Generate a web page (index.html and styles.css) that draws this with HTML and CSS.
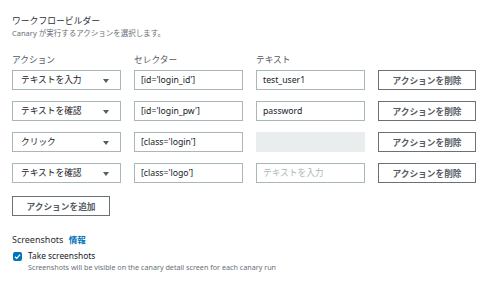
FILE: index.html
```html
<!DOCTYPE html>
<html lang="ja">
<head>
    <meta charset="UTF-8">
    <title>ワークフロービルダー</title>
    <link rel="stylesheet" href="styles.css">
</head>
<body>
    <div class="builder">
        <div class="header">
            <h2>ワークフロービルダー</h2>
            <p class="desc">Canary が実行するアクションを選択します。</p>
        </div>

        <div class="grid">
            <div class="col-label">アクション</div>
            <div class="col-label">セレクター</div>
            <div class="col-label">テキスト</div>
            <div></div>

            <div class="select">テキストを入力<span class="caret"></span></div>
            <div class="input">[id='login_id']</div>
            <div class="input">test_user1</div>
            <button class="btn">アクションを削除</button>

            <div class="select">テキストを確認<span class="caret"></span></div>
            <div class="input">[id='login_pw']</div>
            <div class="input">password</div>
            <button class="btn">アクションを削除</button>

            <div class="select">クリック<span class="caret"></span></div>
            <div class="input">[class='login']</div>
            <div class="input disabled"></div>
            <button class="btn">アクションを削除</button>

            <div class="select">テキストを確認<span class="caret"></span></div>
            <div class="input">[class='logo']</div>
            <div class="input placeholder">テキストを入力</div>
            <button class="btn">アクションを削除</button>
        </div>

        <button class="btn add">アクションを追加</button>

        <div class="shots">
            <div class="shots-title">Screenshots <a class="info">情報</a></div>
            <label class="check">
                <span class="box">
                    <svg viewBox="0 0 10 10"><path d="M2.2 5.2l1.9 1.9 3.8-4.2" fill="none" stroke="#fff" stroke-width="1.5"/></svg>
                </span>
                <span class="check-text">
                    <span class="check-label">Take screenshots</span>
                    <span class="check-desc">Screenshots will be visible on the canary detail screen for each canary run</span>
                </span>
            </label>
        </div>
    </div>
</body>
</html>
```

FILE: styles.css
```css
* {
    margin: 0;
    padding: 0;
    box-sizing: border-box;
}

body {
    font-family: "Noto Sans", "Noto Sans CJK JP", sans-serif;
    background: #fff;
    color: #16191f;
    width: 500px;
    height: 290px;
    overflow: hidden;
}

.builder {
    padding: 14px 12px 0 12px;
}

.header h2 {
    font-size: 8.8px;
    font-weight: 400;
    color: #2a2e33;
    line-height: 14px;
}

.desc {
    font-size: 7.5px;
    color: #687078;
    line-height: 11px;
}

.grid {
    margin-top: 15px;
    display: grid;
    grid-template-columns: 109px 109px 109px 98px;
    column-gap: 13px;
    row-gap: 11px;
    align-items: center;
}

.col-label {
    font-size: 8.7px;
    color: #545b64;
    line-height: 12px;
    margin-bottom: -7px;
}

.select,
.input {
    height: 20px;
    border: 1px solid #aab7b8;
    font-size: 8.7px;
    line-height: 18px;
    padding: 0 6px;
    color: #16191f;
    white-space: nowrap;
}

.select {
    position: relative;
    padding-left: 8px;
}

.caret {
    position: absolute;
    right: 11px;
    top: 8px;
    width: 0;
    height: 0;
    border-left: 3px solid transparent;
    border-right: 3px solid transparent;
    border-top: 4px solid #545b64;
}

.disabled {
    background: #eaeded;
    border-color: #eaeded;
}

.placeholder {
    color: #aab7b8;
}

.btn {
    height: 20px;
    background: #fff;
    border: 1px solid #687078;
    font-family: "Noto Sans", "Noto Sans CJK JP", sans-serif;
    font-size: 8.7px;
    font-weight: 700;
    color: #545b64;
    padding: 0 8px;
}

.add {
    margin-top: 13px;
    width: 98px;
}

.shots {
    margin-top: 17px;
}

.shots-title {
    font-size: 9px;
    color: #2a2e33;
    line-height: 14px;
}

.info {
    color: #0073bb;
    font-size: 8.5px;
    font-weight: 700;
    margin-left: 3px;
}

.check {
    display: flex;
    align-items: flex-start;
    margin-top: 2px;
}

.box {
    width: 9px;
    height: 9px;
    background: #0073bb;
    border-radius: 2px;
    margin: 3px 6px 0 1px;
    display: flex;
}

.box svg {
    width: 9px;
    height: 9px;
}

.check-text {
    display: flex;
    flex-direction: column;
}

.check-label {
    font-size: 8.4px;
    line-height: 13px;
    color: #16191f;
}

.check-desc {
    font-size: 7.2px;
    line-height: 11px;
    color: #687078;
}
```
